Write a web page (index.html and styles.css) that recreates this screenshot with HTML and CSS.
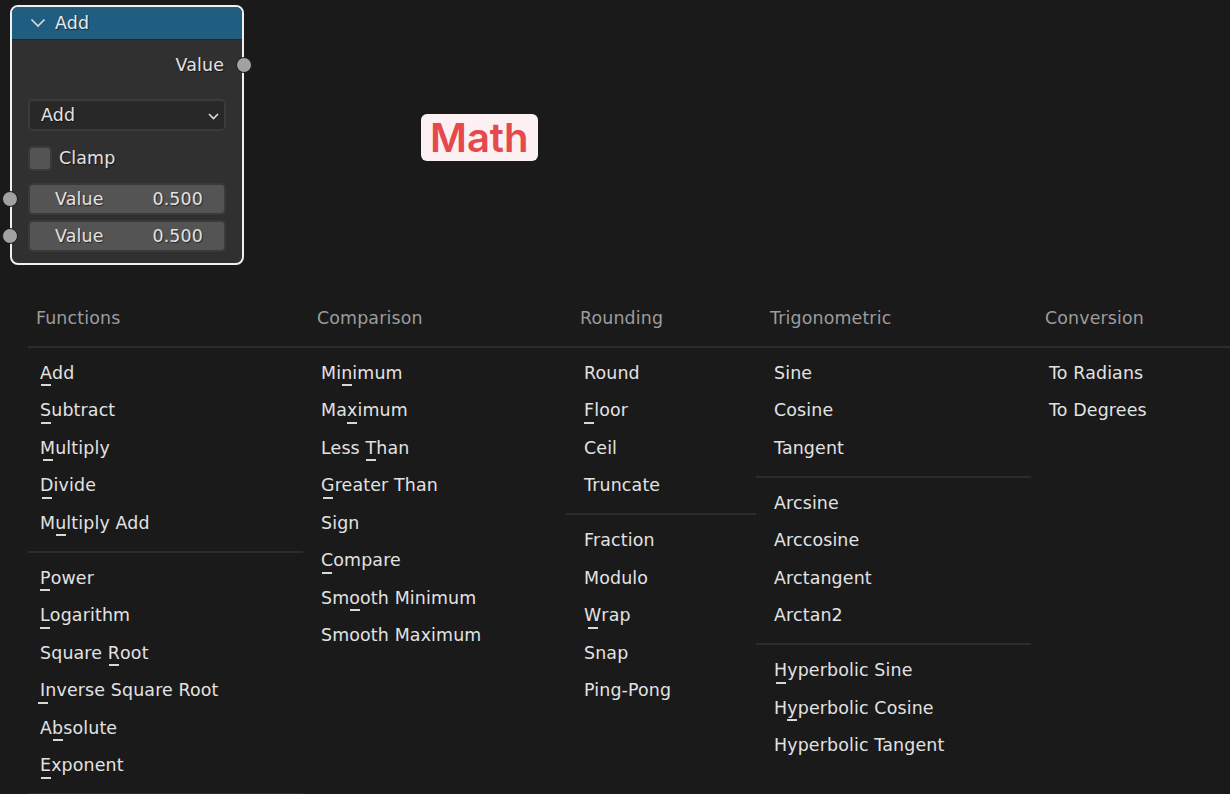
FILE: index.html
```html
<!DOCTYPE html>
<html>
<head>
<meta charset="utf-8">
<link rel="stylesheet" href="styles.css">
</head>
<body>
<div class="top">
  <div class="node">
    <div class="node-head">
      <svg class="head-chev" width="16" height="10" viewBox="0 0 16 10"><path d="M1.5 1.5 L8 8 L14.5 1.5" fill="none" stroke="#dcdcdc" stroke-width="1.6"/></svg>
      <span>Add</span>
    </div>
    <div class="node-body">
      <div class="out-row"><span>Value</span><i class="socket socket-out"></i></div>
      <div class="select"><span>Add</span><svg width="11" height="7" viewBox="0 0 11 7"><path d="M1 1 L5.5 5.5 L10 1" fill="none" stroke="#dcdcdc" stroke-width="1.6"/></svg></div>
      <div class="check-row"><i class="checkbox"></i><span>Clamp</span></div>
      <div class="field-row"><i class="socket socket-in"></i><div class="field"><span>Value</span><span>0.500</span></div></div>
      <div class="field-row"><i class="socket socket-in"></i><div class="field"><span>Value</span><span>0.500</span></div></div>
    </div>
  </div>
  <div class="badge">Math</div>
</div>

<div class="menu">
  <div class="col col-first w1">
    <div class="col-head">Functions</div>
    <div class="items">
      <div class="item"><u>A</u>dd</div>
      <div class="item"><u>S</u>ubtract</div>
      <div class="item"><u>M</u>ultiply</div>
      <div class="item"><u>D</u>ivide</div>
      <div class="item">M<u>u</u>ltiply Add</div>
      <div class="sep"></div>
      <div class="item"><u>P</u>ower</div>
      <div class="item"><u>L</u>ogarithm</div>
      <div class="item">Square <u>R</u>oot</div>
      <div class="item"><u>I</u>nverse Square Root</div>
      <div class="item">A<u>b</u>solute</div>
      <div class="item"><u>E</u>xponent</div>
      <div class="sep"></div>
    </div>
  </div>
  <div class="col w2">
    <div class="col-head">Comparison</div>
    <div class="items">
      <div class="item">Mi<u>n</u>imum</div>
      <div class="item">Ma<u>x</u>imum</div>
      <div class="item">Less <u>T</u>han</div>
      <div class="item"><u>G</u>reater Than</div>
      <div class="item">Sign</div>
      <div class="item"><u>C</u>ompare</div>
      <div class="item">Sm<u>o</u>oth Minimum</div>
      <div class="item">Smooth Maximum</div>
    </div>
  </div>
  <div class="col w3">
    <div class="col-head">Rounding</div>
    <div class="items">
      <div class="item">Round</div>
      <div class="item"><u>F</u>loor</div>
      <div class="item">Ceil</div>
      <div class="item">Truncate</div>
      <div class="sep"></div>
      <div class="item">Fraction</div>
      <div class="item">Modulo</div>
      <div class="item"><u>W</u>rap</div>
      <div class="item">Snap</div>
      <div class="item">Ping-Pong</div>
    </div>
  </div>
  <div class="col w4">
    <div class="col-head">Trigonometric</div>
    <div class="items">
      <div class="item">Sine</div>
      <div class="item">Cosine</div>
      <div class="item">Tangent</div>
      <div class="sep"></div>
      <div class="item">Arcsine</div>
      <div class="item">Arccosine</div>
      <div class="item">Arctangent</div>
      <div class="item">Arctan2</div>
      <div class="sep"></div>
      <div class="item"><u>H</u>yperbolic Sine</div>
      <div class="item">H<u>y</u>perbolic Cosine</div>
      <div class="item">Hyperbolic Tangent</div>
    </div>
  </div>
  <div class="col w5">
    <div class="col-head">Conversion</div>
    <div class="items">
      <div class="item">To Radians</div>
      <div class="item">To Degrees</div>
    </div>
  </div>
</div>
</body>
</html>
```

FILE: styles.css
```css
html, body {
  margin: 0;
  padding: 0;
  background: #1a1a1a;
  overflow: hidden;
}
body {
  width: 1230px;
  height: 794px;
  font-family: "DejaVu Sans", sans-serif;
  font-size: 17.4px;
  letter-spacing: 0.15px;
  color: #e2e2e2;
}

/* ---------- top canvas ---------- */
.top {
  display: flex;
  align-items: flex-start;
  height: 300px;
  padding: 5px 0 0 10px;
  box-sizing: border-box;
}
.node {
  position: relative;
  width: 234px;
  height: 260px;
  box-sizing: border-box;
  border: 2px solid #f0f0f0;
  border-radius: 8px;
  background: #303030;
  text-shadow: 1px 1px 1px rgba(0, 0, 0, 0.55);
}
.node-head {
  height: 32px;
  display: flex;
  align-items: center;
  background: #1f5e80;
  border-radius: 6px 6px 0 0;
  border-bottom: 1px solid #1d2a31;
  padding-left: 18px;
  color: #e8e8e8;
}
.head-chev {
  margin-right: 9px;
  margin-top: -1px;
}
.node-body {
  padding-top: 15px;
}
.out-row {
  position: relative;
  height: 20px;
  line-height: 20px;
  display: flex;
  justify-content: flex-end;
  padding-right: 18px;
}
.socket {
  position: absolute;
  width: 14px;
  height: 14px;
  border-radius: 50%;
  background: #a1a1a1;
  border: 1px solid #1a1a1a;
  top: 50%;
  margin-top: -8px;
}
.socket-out { right: -10px; }
.socket-in { left: -10px; }

.select {
  margin: 24px 0 0 16px;
  width: 198px;
  height: 32px;
  box-sizing: border-box;
  border: 2px solid #3a3a3a;
  border-radius: 5px;
  background: #282828;
  display: flex;
  align-items: center;
  justify-content: space-between;
  padding: 0 5px 0 11px;
}
.select svg { margin-top: 2px; }

.check-row {
  margin: 14px 0 0 16px;
  height: 26px;
  display: flex;
  align-items: center;
}
.checkbox {
  width: 24px;
  height: 25px;
  box-sizing: border-box;
  border: 2px solid #3a3a3a;
  border-radius: 5px;
  background: #545454;
  margin-right: 7px;
}

.field-row {
  position: relative;
  margin: 12px 0 0 16px;
  width: 198px;
}
.field-row + .field-row { margin-top: 5px; }
.field-row .socket-in { left: -26px; }
.field {
  height: 32px;
  box-sizing: border-box;
  border: 2px solid #3a3a3a;
  border-radius: 5px;
  background: #545454;
  display: flex;
  align-items: center;
  justify-content: space-between;
  padding: 0 21px 0 25px;
}

.badge {
  margin: 109px 0 0 177px;
  height: 47px;
  line-height: 47px;
  padding: 0 9px;
  border-radius: 6px;
  background: #fcf0f2;
  color: #e5484d;
  font-family: Inter, "Noto Sans", sans-serif;
  font-weight: 600;
  font-size: 40px;
  letter-spacing: 0;
}

/* ---------- menu ---------- */
.menu {
  display: flex;
  margin-left: 28px;
}
.w1 { width: 275px; }
.w2 { width: 263px; }
.w3 { width: 190px; }
.w4 { width: 275px; }
.w5 { width: 199px; }

.col-head {
  height: 48px;
  box-sizing: border-box;
  padding: 8px 0 0 14px;
  line-height: 20px;
  color: #9c9c9c;
  border-bottom: 2px solid #2c2c2c;
}
.items {
  padding-top: 6.5px;
}
.item {
  height: 37.5px;
  line-height: 37.5px;
  padding-left: 18px;
  white-space: nowrap;
}
.col-first .col-head { padding-left: 8px; }
.col-first .item { padding-left: 12px; }

.sep {
  height: 2px;
  background: #2c2c2c;
  margin: 8.5px 0 7px;
}

u {
  text-decoration: none;
  position: relative;
}
u::after {
  content: "";
  position: absolute;
  left: 50%;
  margin-left: -5px;
  width: 10px;
  height: 2px;
  top: calc(100% + 1.5px);
  background: #d8d8d8;
}
```
